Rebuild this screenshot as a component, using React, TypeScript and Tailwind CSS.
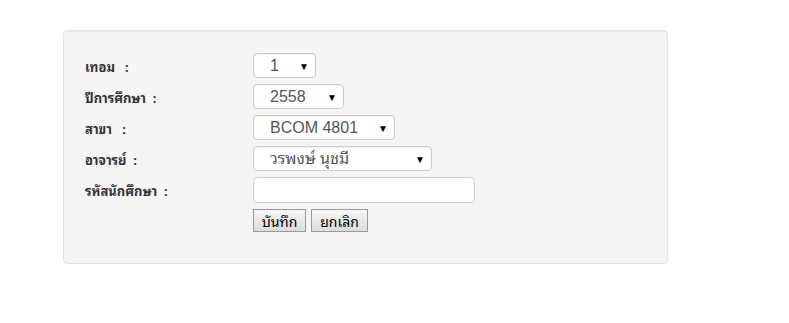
const thai = "font-['Tahoma','Noto_Sans_Thai_Looped','Noto_Sans_Thai','Noto_Sans','Liberation_Sans',sans-serif]"

function FakeSelect({ value, width }: { value: string; width: string }) {
  return (
    <div
      className={`${width} flex h-[25px] items-center justify-between rounded-[4px] border border-[#cccccc] bg-white pl-[16px] pr-[6px] text-[16px] text-[#555555] shadow-[inset_0_1px_1px_rgba(0,0,0,0.06)]`}
    >
      <span className="font-['Liberation_Sans','Noto_Sans_Thai_Looped','Noto_Sans_Thai',sans-serif] leading-none">{value}</span>
      <span className="text-[10px] leading-none text-black">▼</span>
    </div>
  )
}

function Row({ label, children }: { label: string; children: React.ReactNode }) {
  return (
    <div className="flex h-[25px] items-center">
      <div className="w-[168px] whitespace-pre pt-[2px] text-[13px] font-bold text-[#333333]">{label}</div>
      {children}
    </div>
  )
}

export default function App() {
  return (
    <div className={`min-h-[323px] bg-white pl-[63px] pt-[30px] ${thai}`}>
      <div className="w-[605px] rounded-[4px] border border-[#e3e3e3] bg-[#f5f5f5] pb-[30px] pl-[21px] pt-[22px] shadow-[inset_0_1px_1px_rgba(0,0,0,0.05)]">
        <div className="flex flex-col gap-[6px]">
          <Row label={"เทอม\u00a0\u00a0\u00a0:"}>
            <FakeSelect value="1" width="w-[63px]" />
          </Row>
          <Row label={"ปีการศึกษา\u00a0\u00a0:"}>
            <FakeSelect value="2558" width="w-[91px]" />
          </Row>
          <Row label={"สาขา\u00a0\u00a0\u00a0:"}>
            <FakeSelect value="BCOM 4801" width="w-[142px]" />
          </Row>
          <Row label={"อาจารย์\u00a0\u00a0:"}>
            <FakeSelect value="วรพงษ์ นุชมี" width="w-[179px]" />
          </Row>
          <Row label={"รหัสนักศึกษา\u00a0\u00a0:"}>
            <input
              type="text"
              className="h-[26px] w-[222px] rounded-[4px] border border-[#cccccc] bg-white px-2 text-[14px] outline-none"
            />
          </Row>
          <div className="flex h-[25px] items-center gap-[5px] pl-[168px]">
            <button className="h-[23px] w-[53px] border border-[#9a9a9a] bg-gradient-to-b from-[#f6f6f6] to-[#dcdcdc] text-[14px] leading-none text-black">
              บันทึก
            </button>
            <button className="h-[23px] w-[57px] border border-[#9a9a9a] bg-gradient-to-b from-[#f6f6f6] to-[#dcdcdc] text-[14px] leading-none text-black">
              ยกเลิก
            </button>
          </div>
        </div>
      </div>
    </div>
  )
}
